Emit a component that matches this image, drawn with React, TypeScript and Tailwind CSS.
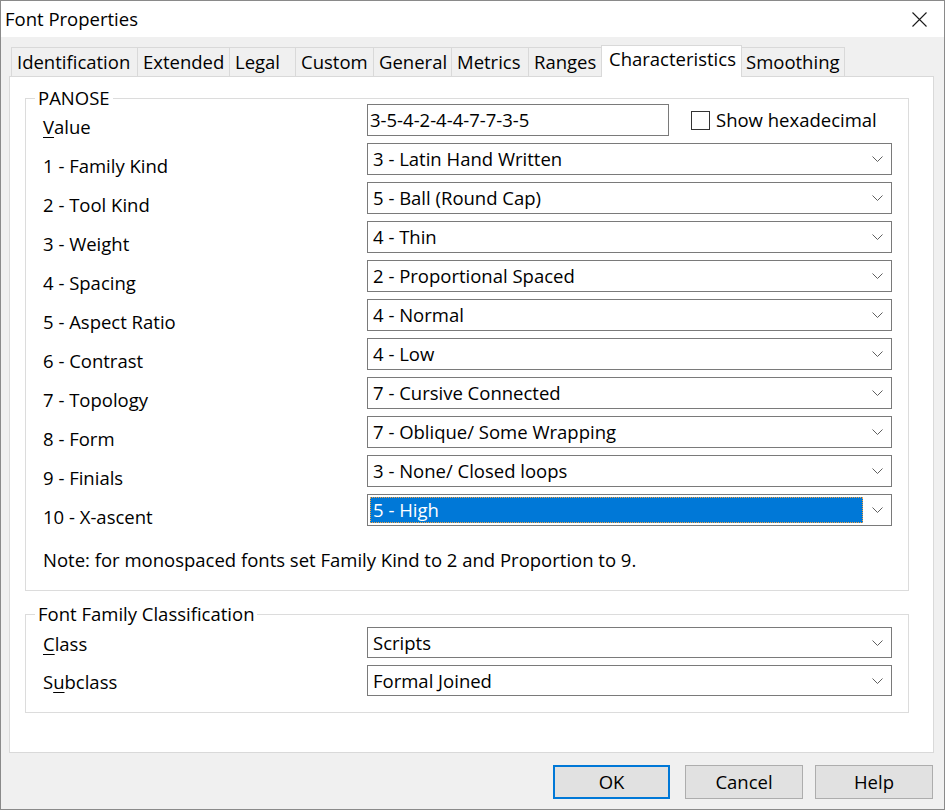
import React from "react";

const font = { fontFamily: '"Open Sans", "Noto Sans", sans-serif' };

const tabs = [
  { label: "Identification", w: "w-[126px]" },
  { label: "Extended", w: "w-[92px]" },
  { label: "Legal", w: "w-[66px]" },
  { label: "Custom", w: "w-[78px]" },
  { label: "General", w: "w-[78px]" },
  { label: "Metrics", w: "w-[77px]" },
  { label: "Ranges", w: "w-[73px]" },
];

const panose = [
  ["1 - Family Kind", "3 - Latin Hand Written"],
  ["2 - Tool Kind", "5 - Ball (Round Cap)"],
  ["3 - Weight", "4 - Thin"],
  ["4 - Spacing", "2 - Proportional Spaced"],
  ["5 - Aspect Ratio", "4 - Normal"],
  ["6 - Contrast", "4 - Low"],
  ["7 - Topology", "7 - Cursive Connected"],
  ["8 - Form", "7 - Oblique/ Some Wrapping"],
  ["9 - Finials", "3 - None/ Closed loops"],
  ["10 - X-ascent", "5 - High"],
];

function Chevron() {
  return (
    <svg width="11" height="6" viewBox="0 0 11 6" className="shrink-0">
      <polyline points="0.5,0.5 5.5,5.5 10.5,0.5" fill="none" stroke="#5f5f5f" strokeWidth="1" />
    </svg>
  );
}

function Combo({ value, active = false, h = "h-[32px]" }: { value: string; active?: boolean; h?: string }) {
  return (
    <div className={`flex ${h} w-[525px] items-center border border-[#7a7a7a] bg-white`}>
      {active ? (
        <div className="ml-[2px] flex h-[calc(100%-4px)] w-[493px] items-center border border-dotted border-[#f5a142] bg-[#0078d7] pl-[2px] text-white">
          {value}
        </div>
      ) : (
        <div className="flex-1 pl-[5px]">{value}</div>
      )}
      <div className="ml-auto pr-[8px]">
        <Chevron />
      </div>
    </div>
  );
}

export default function App() {
  return (
    <div
      className="flex h-[810px] w-[945px] flex-col border border-[#8a8a8a] bg-[#f0f0f0] text-[18.5px] leading-[24px] text-black"
      style={font}
    >
      {/* title bar */}
      <div className="flex h-[36px] shrink-0 items-center justify-between bg-white pl-[4px] pr-[17px]">
        <span className="pb-[1px]">Font Properties</span>
        <svg width="15" height="15" viewBox="0 0 15 15">
          <path d="M0.5 0.5 L14.5 14.5 M14.5 0.5 L0.5 14.5" stroke="#1a1a1a" strokeWidth="1.1" />
        </svg>
      </div>

      <div className="flex flex-1 flex-col px-[8px] pt-[8px]">
        {/* tabs */}
        <div className="-mb-px ml-[2px] flex h-[32px] items-end">
          {tabs.map((t) => (
            <div
              key={t.label}
              className={`${t.w} flex h-[30px] items-start border-l border-t border-[#d9d9d9] bg-[#f0f0f0] pl-[5px] pt-[2px]`}
            >
              {t.label}
            </div>
          ))}
          <div className="relative z-10 flex h-[32px] w-[141px] items-start border-x border-t border-[#d9d9d9] bg-white pl-[7px] pt-[1px]">
            Characteristics
          </div>
          <div className="flex h-[30px] w-[103px] items-start border-r border-t border-[#d9d9d9] bg-[#f0f0f0] pl-[4px] pt-[2px]">
            Smoothing
          </div>
        </div>

        {/* tab panel */}
        <div className="flex h-[677px] w-[925px] flex-col border border-[#d9d9d9] bg-white pl-[15px] pt-[9px]">
          <fieldset className="w-[884px] border border-[#dcdcdc] pb-[18px]">
            <legend className="ml-[9px] px-[3px]">PANOSE</legend>
            <div className="-mt-[6px] flex flex-col gap-[7px] pl-[17px]">
              <div className="flex h-[32px]">
                <div className="w-[324px] pt-[11px]">
                  <span className="underline underline-offset-[3px]">V</span>alue
                </div>
                <div className="flex h-[32px] w-[302px] items-center border border-[#7a7a7a] pl-[2px]">
                  3-5-4-2-4-4-7-7-3-5
                </div>
                <div className="ml-[22px] flex items-center">
                  <div className="h-[19px] w-[19px] border border-[#333333] bg-white" />
                  <span className="ml-[6px]">Show hexadecimal</span>
                </div>
              </div>
              {panose.map(([label, value], i) => (
                <div key={label} className="flex h-[32px]">
                  <div className="w-[324px] pt-[11px]">{label}</div>
                  <Combo value={value} active={i === panose.length - 1} />
                </div>
              ))}
            </div>
            <div className="mt-[22px] pl-[17px]">
              Note: for monospaced fonts set Family Kind to 2 and Proportion to 9.
            </div>
          </fieldset>

          <fieldset className="mt-[11px] w-[884px] border border-[#dcdcdc] pb-[16px]">
            <legend className="ml-[9px] px-[3px]">Font Family Classification</legend>
            <div className="mt-[1px] flex flex-col gap-[7px] pl-[17px]">
              <div className="flex h-[31px]">
                <div className="w-[324px] pt-[5px]">
                  <span className="underline underline-offset-[3px]">C</span>lass
                </div>
                <Combo value="Scripts" h="h-[31px]" />
              </div>
              <div className="flex h-[31px]">
                <div className="w-[324px] pt-[5px]">
                  S<span className="underline underline-offset-[3px]">u</span>bclass
                </div>
                <Combo value="Formal Joined" h="h-[31px]" />
              </div>
            </div>
          </fieldset>
        </div>

        {/* buttons */}
        <div className="mt-[12px] flex justify-end pr-[3px]">
          <button className="mr-[15px] h-[34px] w-[117px] border-2 border-[#0078d7] bg-[#e1e1e1]">OK</button>
          <button className="mr-[12px] h-[34px] w-[118px] border border-[#adadad] bg-[#e1e1e1]">Cancel</button>
          <button className="h-[34px] w-[118px] border border-[#adadad] bg-[#e1e1e1]">Help</button>
        </div>
      </div>
    </div>
  );
}
